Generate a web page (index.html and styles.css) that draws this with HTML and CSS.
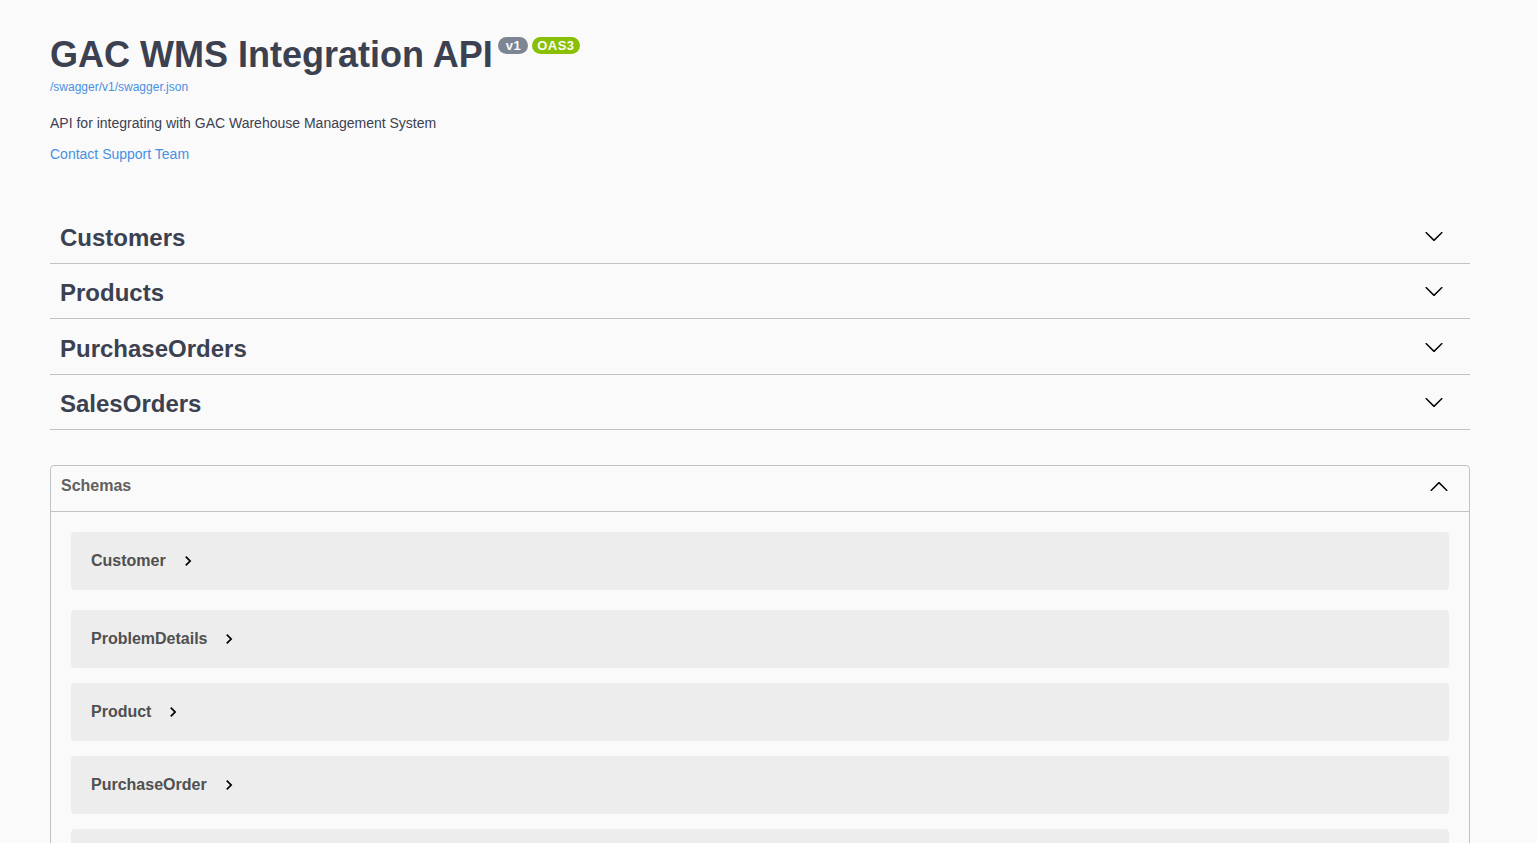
FILE: index.html
```html
<!DOCTYPE html>
<html lang="en">
<head>
<meta charset="utf-8">
<title>GAC WMS Integration API</title>
<link rel="stylesheet" href="styles.css">
</head>
<body>
<div class="wrapper">
  <div class="info">
    <div class="title-row">
      <h2 class="title">GAC WMS Integration API</h2>
      <span class="badge badge-version">v1</span>
      <span class="badge badge-oas">OAS3</span>
    </div>
    <a class="base-url" href="#">/swagger/v1/swagger.json</a>
    <p class="description">API for integrating with GAC Warehouse Management System</p>
    <a class="contact" href="#">Contact Support Team</a>
  </div>

  <div class="tags">
    <div class="tag">
      <h3 class="tag-name">Customers</h3>
      <svg class="arrow" width="20" height="20" viewBox="0 0 20 20"><path d="M17.418 6.109c.272-.268.709-.268.979 0s.271.701 0 .969l-7.908 7.83c-.27.268-.707.268-.979 0l-7.908-7.83c-.27-.268-.27-.701 0-.969.271-.268.709-.268.979 0L10 13.25l7.418-7.141z"/></svg>
    </div>
    <div class="tag">
      <h3 class="tag-name">Products</h3>
      <svg class="arrow" width="20" height="20" viewBox="0 0 20 20"><path d="M17.418 6.109c.272-.268.709-.268.979 0s.271.701 0 .969l-7.908 7.83c-.27.268-.707.268-.979 0l-7.908-7.83c-.27-.268-.27-.701 0-.969.271-.268.709-.268.979 0L10 13.25l7.418-7.141z"/></svg>
    </div>
    <div class="tag">
      <h3 class="tag-name">PurchaseOrders</h3>
      <svg class="arrow" width="20" height="20" viewBox="0 0 20 20"><path d="M17.418 6.109c.272-.268.709-.268.979 0s.271.701 0 .969l-7.908 7.83c-.27.268-.707.268-.979 0l-7.908-7.83c-.27-.268-.27-.701 0-.969.271-.268.709-.268.979 0L10 13.25l7.418-7.141z"/></svg>
    </div>
    <div class="tag">
      <h3 class="tag-name">SalesOrders</h3>
      <svg class="arrow" width="20" height="20" viewBox="0 0 20 20"><path d="M17.418 6.109c.272-.268.709-.268.979 0s.271.701 0 .969l-7.908 7.83c-.27.268-.707.268-.979 0l-7.908-7.83c-.27-.268-.27-.701 0-.969.271-.268.709-.268.979 0L10 13.25l7.418-7.141z"/></svg>
    </div>
  </div>

  <section class="models">
    <div class="models-header">
      <h4 class="models-title">Schemas</h4>
      <svg class="arrow arrow-up" width="20" height="20" viewBox="0 0 20 20"><path d="M17.418 14.908c.272.268.709.268.979 0s.271-.701 0-.969l-7.908-7.83c-.27-.268-.707-.268-.979 0l-7.908 7.83c-.27.268-.27.701 0 .969.271.268.709.268.979 0L10 7.767l7.418 7.141z"/></svg>
    </div>
    <div class="models-list">
      <div class="model-container">
        <span class="model-title">Customer</span>
        <svg class="toggle" width="20" height="20" viewBox="0 0 24 24"><path d="M10 6L8.59 7.41 13.17 12l-4.58 4.59L10 18l6-6z"/></svg>
      </div>
      <div class="model-container">
        <span class="model-title">ProblemDetails</span>
        <svg class="toggle" width="20" height="20" viewBox="0 0 24 24"><path d="M10 6L8.59 7.41 13.17 12l-4.58 4.59L10 18l6-6z"/></svg>
      </div>
      <div class="model-container">
        <span class="model-title">Product</span>
        <svg class="toggle" width="20" height="20" viewBox="0 0 24 24"><path d="M10 6L8.59 7.41 13.17 12l-4.58 4.59L10 18l6-6z"/></svg>
      </div>
      <div class="model-container">
        <span class="model-title">PurchaseOrder</span>
        <svg class="toggle" width="20" height="20" viewBox="0 0 24 24"><path d="M10 6L8.59 7.41 13.17 12l-4.58 4.59L10 18l6-6z"/></svg>
      </div>
      <div class="model-container">
        <span class="model-title">PurchaseOrderLine</span>
        <svg class="toggle" width="20" height="20" viewBox="0 0 24 24"><path d="M10 6L8.59 7.41 13.17 12l-4.58 4.59L10 18l6-6z"/></svg>
      </div>
      <div class="model-container">
        <span class="model-title">SalesOrder</span>
        <svg class="toggle" width="20" height="20" viewBox="0 0 24 24"><path d="M10 6L8.59 7.41 13.17 12l-4.58 4.59L10 18l6-6z"/></svg>
      </div>
    </div>
  </section>
</div>
</body>
</html>
```

FILE: styles.css
```css
html, body {
  margin: 0;
  padding: 0;
  background: #fafafa;
}

body {
  font-family: "Liberation Sans", Arial, sans-serif;
  color: #3b4151;
}

.wrapper {
  width: 1420px;
  margin-left: 50px;
}

.info {
  padding-top: 35px;
}

.title-row {
  display: flex;
  align-items: flex-start;
  height: 40px;
}

.title {
  margin: 0;
  font-size: 36px;
  font-weight: 700;
  line-height: 40px;
  color: #3b4151;
}

.badge {
  margin-top: 2px;
  height: 17px;
  line-height: 17px;
  border-radius: 57px;
  color: #fafafa;
  font-size: 13px;
  font-weight: 700;
  letter-spacing: 0.5px;
}

.badge-version {
  margin-left: 5px;
  padding: 0 7px 0 8px;
  background: #7d8492;
}

.badge-oas {
  margin-left: 4px;
  padding: 0 5px 0 5px;
  background: #89bf04;
}

.base-url {
  display: block;
  width: max-content;
  margin-top: 5px;
  font-size: 12px;
  line-height: 14px;
  color: #4990e2;
  text-decoration: none;
}

.description {
  margin: 21px 0 0;
  font-size: 14px;
  line-height: 16px;
  color: #3b4151;
}

.contact {
  display: block;
  width: max-content;
  margin-top: 15px;
  font-size: 14px;
  line-height: 16px;
  color: #4990e2;
  text-decoration: none;
}

.tags {
  margin-top: 51px;
}

.tag {
  display: flex;
  align-items: center;
  justify-content: space-between;
  height: 50px;
  padding: 0 26px 0 10px;
  border-bottom: 1px solid rgba(59, 65, 81, 0.3);
  margin-bottom: 4.33px;
}

.tag-name {
  margin: 0;
  font-size: 24px;
  font-weight: 700;
  line-height: 28px;
  color: #3b4151;
}

.arrow {
  display: block;
  fill: #000;
  flex: none;
  margin-bottom: 4px;
}

.arrow-up {
  margin-bottom: 0;
}

.models {
  margin-top: 35px;
  border: 1px solid rgba(59, 65, 81, 0.3);
  border-radius: 4px;
  padding-bottom: 20px;
}

.models-header {
  display: flex;
  align-items: center;
  justify-content: space-between;
  height: 41px;
  padding: 0 20px 4px 10px;
  border-bottom: 1px solid rgba(59, 65, 81, 0.3);
}

.models-title {
  margin: 0;
  font-size: 16px;
  font-weight: 700;
  line-height: 20px;
  color: #606060;
}

.models-list {
  padding-top: 20px;
}

.model-container {
  display: flex;
  align-items: center;
  height: 58px;
  margin: 0 20px 15px;
  padding-left: 20px;
  border-radius: 4px;
  background: rgba(0, 0, 0, 0.05);
}

.model-container:first-child {
  margin-bottom: 20px;
}

.model-title {
  font-size: 16px;
  font-weight: 700;
  line-height: 20px;
  color: #505050;
}

.toggle {
  display: block;
  margin-left: 12px;
  fill: #000;
}
```
